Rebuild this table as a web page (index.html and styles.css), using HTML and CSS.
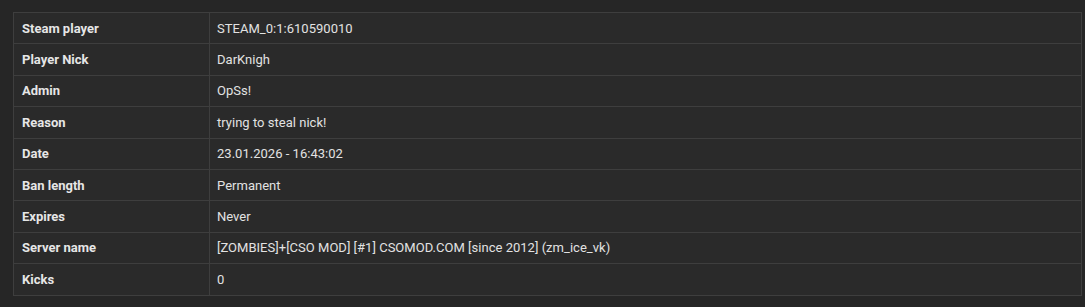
FILE: index.html
```html
<!DOCTYPE html>
<html>
<head>
<meta charset="utf-8">
<link rel="stylesheet" href="styles.css">
</head>
<body>
<div class="wrap">
<table class="info">
<tr><th>Steam player</th><td>STEAM_0:1:610590010</td></tr>
<tr><th>Player Nick</th><td>DarKnigh</td></tr>
<tr><th>Admin</th><td>OpSs!</td></tr>
<tr><th>Reason</th><td>trying to steal nick!</td></tr>
<tr><th>Date</th><td>23.01.2026 - 16:43:02</td></tr>
<tr><th>Ban length</th><td>Permanent</td></tr>
<tr><th>Expires</th><td>Never</td></tr>
<tr><th>Server name</th><td>[ZOMBIES]+[CSO MOD] [#1] CSOMOD.COM [since 2012] (zm_ice_vk)</td></tr>
<tr><th>Kicks</th><td>0</td></tr>
</table>
</div>
</body>
</html>
```
FILE: styles.css
```css
html, body {
  margin: 0;
  background: #262626;
}
body {
  font-family: Roboto, "Liberation Sans", sans-serif;
  font-size: 13px;
  color: #e4e4e4;
}
.wrap {
  padding: 12px 3px 12px 13px;
}
.info {
  width: 100%;
  border-collapse: collapse;
  background: #2a2a2a;
  border: 1px solid #3e3e3e;
}
.info th, .info td {
  border: 1px solid #3e3e3e;
  padding: 7.5px 8px;
  line-height: 15.4px;
  text-align: left;
  vertical-align: middle;
}
.info th {
  width: 179px;
  font-weight: 700;
  color: #e6e6e6;
}
.info td {
  padding-left: 7px;
  font-weight: 400;
  color: #e2e2e2;
  letter-spacing: 0.02px;
}
```
